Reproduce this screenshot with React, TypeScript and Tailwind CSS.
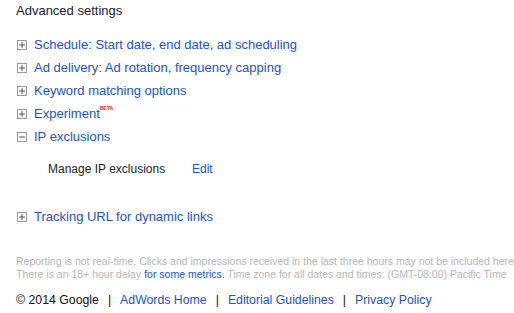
import React from "react";

const Box = ({ open = false }: { open?: boolean }) => (
  <svg width="10" height="10" viewBox="0 0 10 10" className="shrink-0">
    <rect x="0.5" y="0.5" width="9" height="9" fill="#fff" stroke="#9a9a9a" />
    <line x1="2" y1="5" x2="8" y2="5" stroke="#555" strokeWidth="1" />
    {!open && <line x1="5" y1="2" x2="5" y2="8" stroke="#555" strokeWidth="1" />}
  </svg>
);

const Row = ({ label, open, beta }: { label: string; open?: boolean; beta?: boolean }) => (
  <div className="flex items-center h-[23px] gap-[7px]">
    <Box open={open} />
    <span className="text-[#2255c4]">
      {label}
      {beta && (
        <sup className="text-[5px] font-bold text-[#e02020] align-top relative top-[2px]">BETA</sup>
      )}
    </span>
  </div>
);

export default function App() {
  return (
    <div
      className="w-[514px] h-[313px] overflow-hidden bg-white pl-[17px] pt-[3px] text-[13px] leading-[16px]"
      style={{ fontFamily: '"Liberation Sans", Arial, sans-serif' }}
    >
      <div className="text-[#222] text-[13px] h-[18px] -ml-[1px]">Advanced settings</div>
      <div className="mt-[12px]">
        <Row label="Schedule: Start date, end date, ad scheduling" />
        <Row label="Ad delivery: Ad rotation, frequency capping" />
        <Row label="Keyword matching options" />
        <Row label="Experiment" beta />
        <Row label="IP exclusions" open />
      </div>
      <div className="flex mt-[13px] h-[16px] text-[12px]">
        <span className="ml-[31px] w-[144px] text-[#222]">Manage IP exclusions</span>
        <span className="text-[#2255c4]">Edit</span>
      </div>
      <div className="mt-[28px]">
        <Row label="Tracking URL for dynamic links" />
      </div>
      <div className="mt-[27px] text-[10.5px] leading-[13px] text-[#b5b5b5] whitespace-nowrap -ml-[1px]">
        <div>Reporting is not real-time. Clicks and impressions received in the last three hours may not be included here.</div>
        <div>
          There is an 18+ hour delay <span className="text-[#2255c4]">for some metrics.</span> Time zone for all dates and
          times: (GMT-08:00) Pacific Time
        </div>
      </div>
      <div className="mt-[11px] text-[12.3px] text-[#111] whitespace-nowrap -ml-[1px]">
        © 2014 Google<span className="mx-[9px]">|</span>
        <span className="text-[#2255c4]">AdWords Home</span>
        <span className="mx-[9px]">|</span>
        <span className="text-[#2255c4]">Editorial Guidelines</span>
        <span className="mx-[9px]">|</span>
        <span className="text-[#2255c4]">Privacy Policy</span>
      </div>
    </div>
  );
}
